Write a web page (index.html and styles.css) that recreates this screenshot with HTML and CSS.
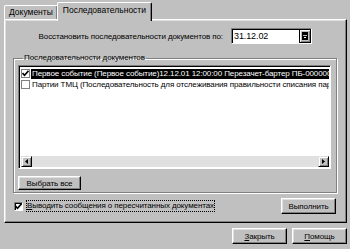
FILE: index.html
```html
<!DOCTYPE html>
<html lang="ru">
<head>
<meta charset="utf-8">
<link rel="stylesheet" href="styles.css">
</head>
<body>
<div class="dialog">
  <div class="tabs">
    <div class="tab">Документы</div>
    <div class="tab active">Последовательности</div>
  </div>
  <div class="panel">
    <div class="date-row">
      <span class="label">Восстановить последовательности документов по:</span>
      <div class="date-input">
        <span class="date-text">31.12.02</span>
        <span class="cal-btn"><svg width="6" height="8" viewBox="0 0 6 8"><rect x="0.5" y="0.5" width="5" height="7" fill="#c0c0c0" stroke="#000"/><rect x="1" y="1" width="4" height="2" fill="#000"/><rect x="1.5" y="4.5" width="3" height="2" fill="#fff" stroke="#000" stroke-width="1"/></svg></span>
      </div>
    </div>
    <fieldset class="group">
      <legend>Последовательности документов</legend>
      <div class="list">
        <div class="rows">
          <div class="row selected"><span class="cb"><svg width="7" height="7" viewBox="0 0 7 7"><path d="M0.5 3 L2.5 5.2 L6.5 0.8" fill="none" stroke="#000" stroke-width="1.6"/></svg></span><span class="row-text">Первое событие (Первое событие)12.12.01 12:00:00 Перезачет-бартер ПБ-00000001</span></div>
          <div class="row"><span class="cb"></span><span class="row-text">Партии ТМЦ (Последовательность для отслеживания правильности списания партий)</span></div>
        </div>
        <div class="hscroll">
          <span class="arrow"><svg width="3" height="5" viewBox="0 0 3 5"><path d="M3 0 L0 2.5 L3 5 Z" fill="#000"/></svg></span>
          <span class="track"></span>
          <span class="arrow"><svg width="3" height="5" viewBox="0 0 3 5"><path d="M0 0 L3 2.5 L0 5 Z" fill="#000"/></svg></span>
        </div>
      </div>
      <button class="btn select-all">Выбрать все</button>
    </fieldset>
    <div class="bottom-row">
      <label class="check-line"><span class="cb"><svg width="7" height="7" viewBox="0 0 7 7"><path d="M0.5 3 L2.5 5.2 L6.5 0.8" fill="none" stroke="#000" stroke-width="1.6"/></svg></span><span class="focus-text"><u>В</u>ыводить сообщения о пересчитанных документах</span></label>
      <button class="btn run">Выполнить</button>
    </div>
  </div>
  <div class="footer">
    <button class="btn foot"><u>З</u>акрыть</button>
    <button class="btn foot"><u>П</u>омощь</button>
  </div>
</div>
</body>
</html>
```

FILE: styles.css
```css
* { box-sizing: border-box; }
body {
  margin: 0;
  background: #c0c0c0;
  font-family: "Liberation Sans", Arial, sans-serif;
  font-size: 8px;
  letter-spacing: -0.1px;
  color: #000;
  width: 350px;
  height: 249px;
  overflow: hidden;
}
.dialog { padding: 2px 3px 0 4px; }
.tabs { display: flex; align-items: flex-end; height: 17px; }
.tab {
  height: 14px;
  padding: 0 4px;
  border: 1px solid;
  border-color: #fff #000 transparent #fff;
  border-bottom: none;
  box-shadow: inset -1px 0 #808080;
  line-height: 12px;
  border-radius: 2px 2px 0 0;
  white-space: nowrap;
  letter-spacing: 0;
  font-size: 8.5px;
}
.tab.active {
  height: 19px;
  margin-bottom: -2px;
  margin-left: -1px;
  padding: 1px 5px 0;
  background: #c0c0c0;
  position: relative;
  z-index: 1;
}
.panel {
  width: 343px;
  height: 204px;
  border: 1px solid;
  border-color: #fff #000 #000 #fff;
  box-shadow: inset -1px -1px #808080, inset 1px 1px #dfdfdf;
  padding: 8px 10px 0 8px;
}
.date-row {
  display: flex;
  justify-content: flex-end;
  align-items: center;
  height: 16px;
  padding-right: 24px;
}
.label { margin-right: 8px; white-space: nowrap; }
.date-input {
  display: flex;
  width: 81px;
  height: 16px;
  background: #fff;
  border: 1px solid;
  border-color: #808080 #fff #fff #808080;
  box-shadow: inset 1px 1px #000;
  padding: 1px 0 1px 2px;
  align-items: center;
  font-size: 9px;
}
.date-text { flex: 1; line-height: 12px; }
.cal-btn {
  width: 12px;
  height: 14px;
  border: 1px solid #000;
  background: #c0c0c0;
  display: flex;
  align-items: center;
  justify-content: center;
  box-shadow: inset 1px 1px #fff, inset -1px -1px #808080;
}
.group {
  margin: 9px 0 0 0;
  min-width: 0;
  width: 324px;
  padding: 2px 5px 3px 4px;
  border: 1px solid #808080;
  box-shadow: inset 1px 1px #fff, 1px 1px #fff;
  height: 140px;
}
.group legend {
  padding: 0 1px;
  margin-left: 5px;
  line-height: 10px;
}
.list {
  height: 104px;
  background: #fff;
  border: 1px solid;
  border-color: #808080 #fff #fff #808080;
  box-shadow: inset 1px 1px #000;
  padding: 2px 1px 1px 2px;
  display: flex;
  flex-direction: column;
  overflow: hidden;
}
.rows { flex: 1; overflow: hidden; min-width: 0; }
.row { display: flex; align-items: center; height: 11px; white-space: nowrap; min-width: 0; }
.row-text { overflow: hidden; flex: 1; min-width: 0; line-height: 10px; padding-left: 1px; }
.row.selected .row-text { background: #000; color: #fff; }
.cb {
  width: 9px;
  height: 9px;
  flex: none;
  background: #fff;
  border: 1px solid;
  border-color: #808080 #fff #fff #808080;
  box-shadow: inset 1px 1px #000;
  display: flex;
  align-items: center;
  justify-content: center;
  margin-right: 1px;
}
.row .cb { border: 1px solid #808080; box-shadow: none; }
.hscroll { display: flex; height: 11px; flex: none; }
.arrow {
  width: 11px;
  height: 11px;
  background: #c0c0c0;
  border: 1px solid;
  border-color: #dfdfdf #000 #000 #dfdfdf;
  box-shadow: inset 1px 1px #fff, inset -1px -1px #808080;
  display: flex;
  align-items: center;
  justify-content: center;
}
.track { flex: 1; background: #e0e0e0; }
.btn {
  font: inherit;
  letter-spacing: inherit;
  color: #000;
  background: #c0c0c0;
  border: 1px solid;
  border-color: #fff #000 #000 #fff;
  box-shadow: inset -1px -1px #808080, inset 1px 1px #dfdfdf;
  padding: 0;
  height: 15px;
  line-height: 11px;
}
.select-all { width: 63px; margin-top: 7px; display: block; height: 14px; }
.bottom-row {
  display: flex;
  justify-content: space-between;
  align-items: center;
  margin-top: 5px;
}
.check-line { display: flex; align-items: center; padding-left: 1px; }
.check-line .cb { margin-right: 4px; }
.focus-text { outline: 1px dotted #000; line-height: 10px; }
.run { width: 55px; height: 16px; }
.footer {
  display: flex;
  justify-content: flex-end;
  gap: 5px;
  margin-top: 5px;
}
.foot { width: 55px; height: 16px; }
```
